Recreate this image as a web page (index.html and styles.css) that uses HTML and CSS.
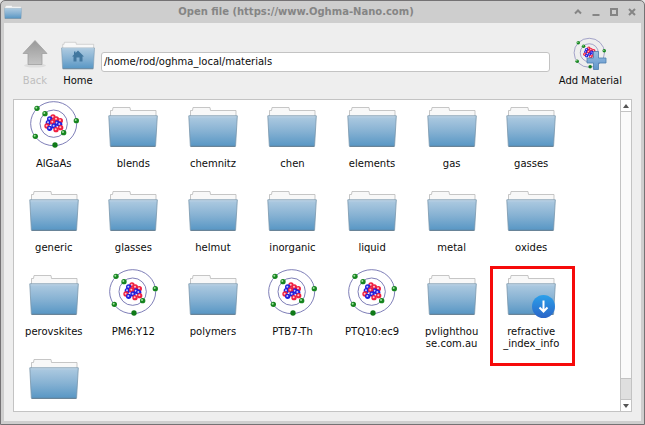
FILE: index.html
```
<!DOCTYPE html>
<html lang="en">
<head>
    <meta charset="UTF-8">
    <meta name="viewport" content="width=device-width, initial-scale=1.0">
    <title>Open file (https://www.Oghma-Nano.com)</title>
    <link rel="stylesheet" href="styles.css">
</head>
<body>
    <!-- Shared icons -->
    <svg class="sprite" aria-hidden="true">
        <defs>
            <linearGradient id="folderFill" x1="0" y1="0" x2="0" y2="1">
                <stop offset="0" stop-color="#afcbe1"/>
                <stop offset="0.5" stop-color="#87b2d3"/>
                <stop offset="1" stop-color="#5796c4"/>
            </linearGradient>
            <linearGradient id="arrowFill" x1="0" y1="0" x2="0" y2="1">
                <stop offset="0" stop-color="#999"/>
                <stop offset="1" stop-color="#c4c4c4"/>
            </linearGradient>
            <linearGradient id="badgeFill" x1="0" y1="0" x2="0" y2="1">
                <stop offset="0" stop-color="#2ba0ea"/>
                <stop offset="1" stop-color="#2a65c8"/>
            </linearGradient>
            <linearGradient id="plusFill" x1="0" y1="0" x2="0" y2="1">
                <stop offset="0" stop-color="#9bbfe2"/>
                <stop offset="1" stop-color="#5f94cb"/>
            </linearGradient>
            <g id="electron">
                <circle r="8" fill="#16851f"/>
                <circle cx="-2" cy="-2" r="3" fill="#a5e3a5"/>
            </g>
            <g id="proton">
                <circle r="8" fill="#f02040"/>
                <circle cx="-1" cy="-1" r="3" fill="#ffc4cc"/>
            </g>
            <g id="neutron">
                <circle r="8" fill="#2020dc"/>
                <circle cx="-1" cy="-1" r="3" fill="#c4c4ff"/>
            </g>
        </defs>
        <symbol id="folder" viewBox="0 0 50 48">
            <path d="M2.5 17V10.500H4.500L5 7.500H22L22.500 10.500H48V17Z" fill="#f8f8f8" stroke="#b9b9b9" stroke-width="0.800"/>
            <path d="M0.800 15.800H49.300L47.600 45.500Q47.500 46.500 46.500 46.500H3.300Q2.400 46.500 2.300 45.500Z" fill="url(#folderFill)" stroke="#7895ab" stroke-width="0.800"/>
            <path d="M2.500 46.300H47.500" stroke="#637d91" stroke-width="1"/>
            <path d="M1.500 16.800H48.500" stroke="#c5dae9" stroke-width="0.700"/>
        </symbol>
        <symbol id="atom" viewBox="24 6 150 144">
            <ellipse cx="98" cy="77" rx="69" ry="66" fill="none" stroke="#6464a8" stroke-width="2.500"/>
            <ellipse cx="98" cy="77" rx="41" ry="41" fill="none" stroke="#6464a8" stroke-width="2.500"/>
            <use href="#proton" x="96" y="57"/>
            <use href="#neutron" x="86" y="63"/>
            <use href="#proton" x="106" y="63"/>
            <use href="#proton" x="118" y="68"/>
            <use href="#neutron" x="108" y="75"/>
            <use href="#neutron" x="82" y="74"/>
            <use href="#proton" x="95" y="72"/>
            <use href="#proton" x="78" y="84"/>
            <use href="#neutron" x="99" y="84"/>
            <use href="#neutron" x="116" y="79"/>
            <use href="#proton" x="119" y="89"/>
            <use href="#neutron" x="86" y="91"/>
            <use href="#proton" x="105" y="95"/>
            <use href="#electron" x="48" y="31"/>
            <use href="#electron" x="72" y="47"/>
            <use href="#electron" x="166" y="68"/>
            <use href="#electron" x="128" y="104"/>
            <use href="#electron" x="43" y="115"/>
            <circle cx="102" cy="141" r="8" fill="#107a18"/>
        </symbol>
    </svg>

    <div class="window">
        <header class="titlebar">
            <svg class="app-icon" viewBox="0 6 50 42" preserveAspectRatio="none"><use href="#folder" width="50" height="48"/></svg>
            <h1 class="title">Open file (https://www.Oghma-Nano.com)</h1>
            <div class="window-buttons">
                <button type="button" aria-label="Shade">
                    <svg width="8" height="8" viewBox="0 0 8 8"><path d="M1 5.500L4 2.500L7 5.500"/></svg>
                </button>
                <button type="button" aria-label="Minimize">
                    <svg width="8" height="8" viewBox="0 0 8 8"><path d="M0.500 7H7.500"/></svg>
                </button>
                <button type="button" aria-label="Maximize">
                    <svg width="8" height="8" viewBox="0 0 8 8"><path d="M1 1H7V7H1Z"/></svg>
                </button>
                <button type="button" aria-label="Close">
                    <svg width="8" height="8" viewBox="0 0 8 8"><path d="M1 1L7 7M7 1L1 7"/></svg>
                </button>
            </div>
        </header>

        <main class="content">
            <div class="toolbar">
                <button class="tool" type="button" disabled>
                    <svg class="tool-icon" viewBox="0 0 34 34">
                        <ellipse cx="17" cy="28.500" rx="11" ry="2" fill="#dedede"/>
                        <path d="M17 3.500L29 16.500H24V27.500H10V16.500H5Z" fill="url(#arrowFill)" stroke="#a0a0a0" stroke-width="0.800"/>
                    </svg>
                    Back
                </button>
                <button class="tool" type="button">
                    <svg class="tool-icon" viewBox="0 0 34 34">
                        <use href="#folder" x="0" y="0" width="34" height="33"/>
                        <path d="M17 13.500L23 19.500H21.500V24.500H18.500V20.500H15.500V24.500H12.500V19.500H11L13 17.500V14.500H14.500V16Z" fill="#42779f"/>
                    </svg>
                    Home
                </button>
                <textarea class="path" rows="1" spellcheck="false" aria-label="Path">/home/rod/oghma_local/materials</textarea>
                <button class="tool add" type="button">
                    <svg class="tool-icon" viewBox="0 0 34 34">
                        <use href="#atom" x="0" y="0" width="33" height="32"/>
                        <path d="M20.500 14.500H25.500V21H33V26H25.500V32.500H20.500V26H14V21H20.500Z" fill="url(#plusFill)" stroke="#4c7dae" stroke-width="0.800"/>
                    </svg>
                    Add Material
                </button>
            </div>

            <div class="browser">
                <div class="files">
                    <button class="item" type="button"><svg><use href="#atom"/></svg><span>AlGaAs</span></button>
                    <button class="item" type="button"><svg><use href="#folder"/></svg><span>blends</span></button>
                    <button class="item" type="button"><svg><use href="#folder"/></svg><span>chemnitz</span></button>
                    <button class="item" type="button"><svg><use href="#folder"/></svg><span>chen</span></button>
                    <button class="item" type="button"><svg><use href="#folder"/></svg><span>elements</span></button>
                    <button class="item" type="button"><svg><use href="#folder"/></svg><span>gas</span></button>
                    <button class="item" type="button"><svg><use href="#folder"/></svg><span>gasses</span></button>

                    <button class="item" type="button"><svg><use href="#folder"/></svg><span>generic</span></button>
                    <button class="item" type="button"><svg><use href="#folder"/></svg><span>glasses</span></button>
                    <button class="item" type="button"><svg><use href="#folder"/></svg><span>helmut</span></button>
                    <button class="item" type="button"><svg><use href="#folder"/></svg><span>inorganic</span></button>
                    <button class="item" type="button"><svg><use href="#folder"/></svg><span>liquid</span></button>
                    <button class="item" type="button"><svg><use href="#folder"/></svg><span>metal</span></button>
                    <button class="item" type="button"><svg><use href="#folder"/></svg><span>oxides</span></button>

                    <button class="item" type="button"><svg><use href="#folder"/></svg><span>perovskites</span></button>
                    <button class="item" type="button"><svg><use href="#atom"/></svg><span>PM6:Y12</span></button>
                    <button class="item" type="button"><svg><use href="#folder"/></svg><span>polymers</span></button>
                    <button class="item" type="button"><svg><use href="#atom"/></svg><span>PTB7-Th</span></button>
                    <button class="item" type="button"><svg><use href="#atom"/></svg><span>PTQ10:ec9</span></button>
                    <button class="item" type="button"><svg><use href="#folder"/></svg><span>pvlighthou<br>se.com.au</span></button>
                    <button class="item highlighted" type="button">
                        <svg viewBox="0 0 50 48">
                            <use href="#folder" width="50" height="48"/>
                            <circle cx="37.500" cy="38.500" r="11.500" fill="url(#badgeFill)"/>
                            <path d="M37.500 32.500V43M33.500 39.500L37.500 43.500L41.500 39.500" fill="none" stroke="#fff" stroke-width="2"/>
                        </svg>
                        <span>refractive<br>_index_info</span>
                    </button>

                    <button class="item" type="button" aria-label="Folder"><svg><use href="#folder"/></svg></button>
                </div>
                <div class="scrollbar">
                    <button class="scroll-btn" type="button" aria-label="Scroll up">
                        <svg width="6" height="4" viewBox="0 0 6 4"><path d="M0 4L3 0L6 4Z"/></svg>
                    </button>
                    <div class="track"><div class="thumb"></div></div>
                    <button class="scroll-btn" type="button" aria-label="Scroll down">
                        <svg width="6" height="4" viewBox="0 0 6 4"><path d="M0 0L3 4L6 0Z"/></svg>
                    </button>
                </div>
            </div>
        </main>
    </div>
</body>
</html>
```
FILE: styles.css
```
:root {
    --frame: #cecece;
    --frame-edge: #747274;
    --bg: #eeeeee;
    --border: #c3c3c3;
    --text: #0c0c0c;
    --highlight: #f60a0a;
}

*,
*::after {
    margin: 0;
    padding: 0;
    box-sizing: border-box;
}

body {
    background-color: #e4e4e4;
    color: var(--text);
    font-family: "DejaVu Sans", Verdana, sans-serif;
    font-size: 10px;
    line-height: 12px;
}

button {
    border: none;
    background: none;
    color: inherit;
    font: inherit;
}

.sprite {
    position: absolute;
    width: 0;
    height: 0;
}

.window {
    display: flex;
    flex-direction: column;
    height: 100vh;
    padding: 0 3px 3px;
    background-color: var(--frame);
    border: 1px solid var(--frame-edge);
    border-radius: 5px 5px 0 0;
}

/* Title bar */
.titlebar {
    display: flex;
    align-items: center;
    height: 22px;
    padding-right: 1px;
    flex-shrink: 0;
}

.app-icon {
    width: 18px;
    height: 14px;
}

.title {
    flex: 1;
    text-align: center;
    font-size: 10px;
    font-weight: bold;
    color: #858585;
}

.window-buttons {
    display: flex;
    gap: 2px;
}

.window-buttons button {
    display: flex;
    align-items: center;
    justify-content: center;
    width: 16px;
    height: 16px;
}

.window-buttons path {
    fill: none;
    stroke: #858585;
    stroke-width: 2;
}

/* Toolbar */
.content {
    flex: 1;
    display: flex;
    flex-direction: column;
    min-height: 0;
    padding: 0 9px 9px;
    background-color: var(--bg);
}

.toolbar {
    display: flex;
    align-items: center;
    padding: 14px 10px 12px 5px;
}

.tool {
    display: flex;
    flex-direction: column;
    align-items: center;
    gap: 4px;
    width: 34px;
    white-space: nowrap;
}

.tool + .tool {
    margin-left: 9px;
}

.tool:disabled {
    color: #bebebe;
}

.tool-icon {
    width: 34px;
    height: 34px;
}

.path {
    flex: 1;
    min-width: 0;
    height: 20px;
    margin: 0 9px 0 6px;
    padding: 0 2px;
    border: 1px solid var(--border);
    border-radius: 3px;
    background-color: #fff;
    color: inherit;
    font-family: inherit;
    font-size: 10px;
    line-height: 18px;
    white-space: nowrap;
    resize: none;
    overflow: hidden;
}

.add {
    width: auto;
}

/* File list */
.browser {
    flex: 1;
    display: flex;
    min-height: 0;
    background-color: #fff;
    border: 1px solid var(--border);
}

.files {
    flex: 1;
    display: grid;
    grid-template-columns: repeat(7, 1fr);
    grid-auto-rows: 84px;
    align-content: start;
    padding-right: 49px;
    overflow: hidden;
}

.item {
    position: relative;
    display: flex;
    flex-direction: column;
    align-items: center;
    gap: 10px;
    min-width: 0;
}

.item svg {
    width: 50px;
    height: 48px;
    flex-shrink: 0;
    overflow: visible;
}

.highlighted::after {
    content: "";
    position: absolute;
    top: -2px;
    left: -1px;
    right: -4px;
    height: 100px;
    border: 3px solid var(--highlight);
}

/* Scrollbar */
.scrollbar {
    display: flex;
    flex-direction: column;
    width: 11px;
    border-left: 1px solid var(--border);
}

.scroll-btn {
    display: flex;
    align-items: center;
    justify-content: center;
    height: 11px;
}

.scroll-btn path {
    fill: #555;
}

.track {
    flex: 1;
    background-color: #dfdfdf;
    border-top: 1px solid var(--border);
    border-bottom: 1px solid var(--border);
}

.thumb {
    height: 93%;
    background-color: #fafafa;
    border-bottom: 1px solid var(--border);
}
```
